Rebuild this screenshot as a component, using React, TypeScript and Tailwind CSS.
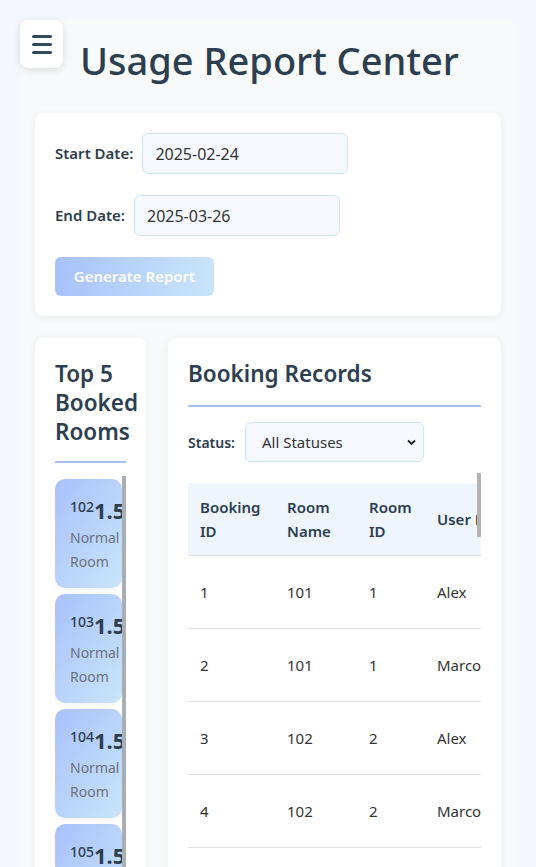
import React from "react";

const names = ["Alex", "Marco"];
const rows = Array.from({ length: 32 }, (_, i) => {
  const id = i + 1;
  const roomNum = 101 + Math.floor(i / 2);
  return {
    id,
    room: String(roomNum),
    roomId: Math.floor(i / 2) + 1,
    user: names[i % 2],
    start: "2025-03-01 09:00",
    end: "2025-03-01 10:30",
    status: "Confirmed",
  };
});

const rooms = ["102", "103", "104", "105", "106"];

export default function App() {
  return (
    <div className="min-h-screen bg-[#f4f7fb] pt-5 px-5 font-['Noto_Sans',sans-serif] text-[#2c3e50]">
      <button className="absolute left-5 top-5 w-[43px] h-[48px] rounded-lg bg-white shadow-[0_2px_8px_rgba(0,0,0,0.12)] flex flex-col items-center justify-center gap-[5px]">
        <span className="block w-5 h-[3px] rounded bg-[#34495e]" />
        <span className="block w-5 h-[3px] rounded bg-[#34495e]" />
        <span className="block w-5 h-[3px] rounded bg-[#34495e]" />
      </button>
      <div className="bg-[#f7f9fb] rounded-lg px-[15px] pt-[16px] pb-5">
        <h1 className="pl-[45px] text-[38px] leading-[48px] font-medium text-[#2c3e50] mb-[29px]">
          Usage Report Center
        </h1>

        <div className="bg-white rounded-lg shadow-[0_2px_10px_rgba(0,0,0,0.06)] p-5 flex flex-col gap-[21px]">
          <div className="flex items-center gap-[9px]">
            <label className="text-[15px] font-semibold text-[#2c3e50]">Start Date:</label>
            <div className="w-[206px] h-[41px] rounded-md border border-[#cfe6fa] bg-[#f5f8ff] px-3 flex items-center text-[16px] text-[#333]">
              2025-02-24
            </div>
          </div>
          <div className="flex items-center gap-[9px]">
            <label className="text-[15px] font-semibold text-[#2c3e50]">End Date:</label>
            <div className="w-[206px] h-[41px] rounded-md border border-[#cfe6fa] bg-[#f5f8ff] px-3 flex items-center text-[16px] text-[#333]">
              2025-03-26
            </div>
          </div>
          <div>
            <button className="w-[159px] h-[39px] rounded-md bg-gradient-to-r from-[#a9c1fb] to-[#c8e5f9] text-white text-[15px] font-semibold">
              Generate Report
            </button>
          </div>
        </div>

        <div className="grid grid-cols-[111px_1fr] gap-[22px] mt-[22px]">
          <div className="bg-white rounded-lg shadow-[0_2px_10px_rgba(0,0,0,0.06)] p-5 min-w-0">
            <h2 className="pt-[1px] text-[22.5px] leading-[29px] font-semibold pb-[15px] border-b-2 border-[#a9c1fb] mb-[13px]">
              Top 5 Booked Rooms
            </h2>
            <div className="relative h-[560px] overflow-hidden pt-[3px]">
              <div className="flex flex-col gap-[6px] pr-[4px]">
                {rooms.map((r) => (
                  <div
                    key={r}
                    className="shrink-0 rounded-[10px] bg-gradient-to-br from-[#a9c1fb] to-[#c8e5f9] pl-[15px] pr-0 pt-[16px] pb-[14px] overflow-hidden shadow-[0_2px_6px_rgba(0,0,0,0.05)]"
                  >
                    <div className="whitespace-nowrap text-[22px] leading-[31px] text-[#2c3e50]">
                      <sup className="text-[14px] font-medium">{r}</sup>
                      <span className="font-bold">1.5 hours</span>
                    </div>
                    <div className="text-[14px] leading-6 text-[#6b7280]">Normal Room</div>
                  </div>
                ))}
              </div>
              <div className="absolute right-0 top-0 bottom-0 w-[4px] bg-[#a9aeb5]" />
            </div>
          </div>

          <div className="bg-white rounded-lg shadow-[0_2px_10px_rgba(0,0,0,0.06)] p-5 min-w-0">
            <h2 className="text-[22.5px] leading-[32px] font-semibold pb-[15px] border-b-2 border-[#a9c1fb] mb-[15px]">
              Booking Records
            </h2>
            <div className="flex items-center gap-[10px]">
              <label className="text-[14px] font-semibold text-[#2c3e50]">Status:</label>
              <div className="relative w-[179px] h-[40px] rounded-md border border-[#cfe6fa] bg-[#f5f8ff] pl-4 flex items-center text-[15px] text-[#333]">
                All Statuses
                <svg className="absolute right-[7px] top-[16px]" width="9" height="7" viewBox="0 0 9 7">
                  <path d="M1 1.5 L4.5 5 L8 1.5" fill="none" stroke="#222" strokeWidth="1.8" />
                </svg>
              </div>
            </div>
            <div className="relative mt-[11px] h-[420px] overflow-hidden">
              <div className="h-full overflow-hidden">
                <table className="mt-[10px] w-full border-collapse text-left text-[15px]">
                  <thead>
                    <tr className="bg-[#eff5fd]">
                      <th className="px-3 py-3 leading-6 font-semibold text-[#2c3e50] border-b border-[#e2e2e2]">
                        <div className="w-[63px]">Booking ID</div>
                      </th>
                      <th className="px-3 py-3 leading-6 font-semibold text-[#2c3e50] border-b border-[#e2e2e2]">
                        <div className="w-[58px]">Room Name</div>
                      </th>
                      <th className="px-3 py-3 leading-6 font-semibold text-[#2c3e50] border-b border-[#e2e2e2]">
                        <div className="w-[44px]">Room ID</div>
                      </th>
                      {["User Name", "Start Time", "End Time", "Status"].map((h) => (
                        <th key={h} className="whitespace-nowrap px-3 py-3 leading-6 font-semibold text-[#2c3e50] border-b border-[#e2e2e2]">
                          {h}
                        </th>
                      ))}
                    </tr>
                  </thead>
                  <tbody>
                    {rows.map((r) => (
                      <tr key={r.id} className="border-b border-[#e2e2e2]">
                        <td className="px-3 py-6 leading-6 text-[#333]">{r.id}</td>
                        <td className="px-3 py-6 leading-6 text-[#333]">{r.room}</td>
                        <td className="px-3 py-6 leading-6 text-[#333]">{r.roomId}</td>
                        <td className="whitespace-nowrap px-3 py-6 leading-6 text-[#333]">{r.user}</td>
                        <td className="whitespace-nowrap px-3 py-6 leading-6 text-[#333]">{r.start}</td>
                        <td className="whitespace-nowrap px-3 py-6 leading-6 text-[#333]">{r.end}</td>
                        <td className="whitespace-nowrap px-3 py-6 leading-6 text-[#333]">{r.status}</td>
                      </tr>
                    ))}
                  </tbody>
                </table>
              </div>
              <div className="absolute right-[0px] top-0 h-[64px] w-[4px] bg-[#b3b3b3]" />
            </div>
          </div>
        </div>
      </div>
    </div>
  );
}
